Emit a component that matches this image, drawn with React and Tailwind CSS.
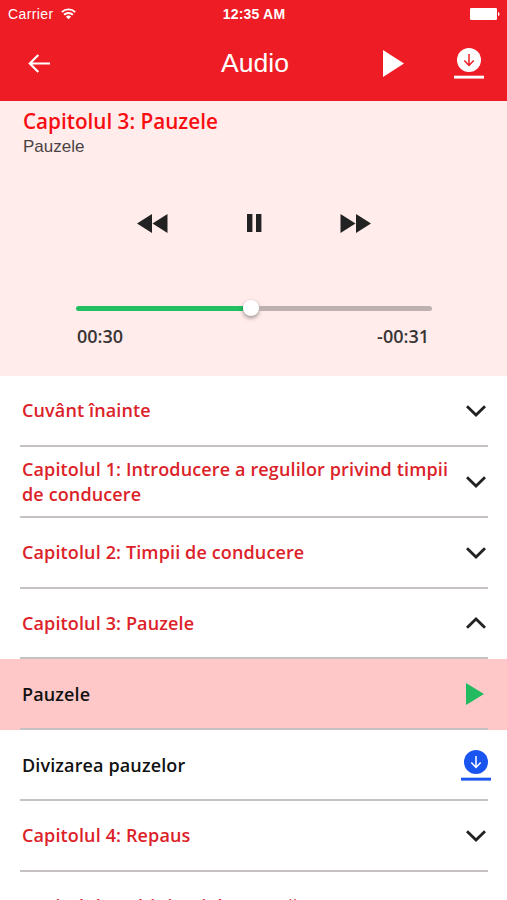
import React from 'react';

const rows = [
  { title: 'Cuvânt înainte', icon: 'down' },
  { title: 'Capitolul 1: Introducere a regulilor privind timpii de conducere', icon: 'down' },
  { title: 'Capitolul 2: Timpii de conducere', icon: 'down' },
  { title: 'Capitolul 3: Pauzele', icon: 'up' },
  { title: 'Pauzele', icon: 'play', track: true, active: true },
  { title: 'Divizarea pauzelor', icon: 'download', track: true },
  { title: 'Capitolul 4: Repaus', icon: 'down' },
  { title: 'Capitolul 5: Alți timpi de muncă', icon: 'down' },
];

function Chevron({ up }) {
  return (
    <svg width="20" height="12" viewBox="0 0 20 12" className={up ? 'mr-[2px] rotate-180' : 'mr-[2px]'} fill="none" stroke="#222" strokeWidth="2.8">
      <path d="M1 1.2 10 10 19 1.2" />
    </svg>
  );
}

function Download({ arrow }) {
  return (
    <svg width="30" height="31" viewBox="0 0 30 31" fill="currentColor">
      <circle cx="15" cy="12" r="12" />
      <rect x="0" y="27.7" width="30" height="2.9" />
      <path d="M15 6v11.2M10.3 12.6l4.7 4.8 4.7-4.8" fill="none" stroke={arrow} strokeWidth="1.5" />
    </svg>
  );
}

function RowIcon({ icon }) {
  if (icon === 'play') {
    return (
      <svg width="18" height="22" viewBox="0 0 18 22" className="mr-[4px]" fill="#22bb60">
        <path d="M0 0 18 11 0 22z" />
      </svg>
    );
  }
  if (icon === 'download') {
    return (
      <span className="-mr-[3px] text-[#1a55f0]">
        <Download arrow="#fff" />
      </span>
    );
  }
  return <Chevron up={icon === 'up'} />;
}

function StatusBar() {
  return (
    <div className="grid h-[27px] grid-cols-3 items-center pl-2 pr-[7px] font-['Liberation_Sans']">
      <div className="flex items-center gap-[7px]">
        <span className="pt-0.5 text-[14px] tracking-[0.4px]">Carrier</span>
        <svg width="15" height="12" viewBox="0 0 15 12" fill="none" stroke="#fff" strokeWidth="1.9">
          <path d="M.8 4.1a9.6 9.6 0 0 1 13.4 0M3.1 6.8a6.3 6.3 0 0 1 8.8 0" />
          <path d="M7.5 11.3 4.9 8.7a3.8 3.8 0 0 1 5.2 0z" fill="#fff" stroke="none" />
        </svg>
      </div>
      <span className="pt-0.5 text-center text-[14px] font-bold tracking-[0.2px]">12:35 AM</span>
      <svg width="30" height="12" viewBox="0 0 30 12" className="justify-self-end" fill="#fff">
        <rect width="27" height="12" rx="1.2" />
        <path d="M28 4c2 .3 2 3.7 0 4z" />
      </svg>
    </div>
  );
}

function Header() {
  return (
    <header className="h-[101px] bg-[#ee1c25] text-white">
      <StatusBar />
      <div className="grid h-[72px] grid-cols-3 items-center pl-7 pr-[23px]">
        <svg width="22" height="19" viewBox="0 0 22 19" fill="none" stroke="#fff" strokeWidth="2.2">
          <path d="M22 9.5H1.5M10.3 1 1.8 9.5l8.5 8.5" />
        </svg>
        <h1 className="pr-0.5 pt-0.5 text-center font-['Liberation_Sans'] text-[26.5px]">Audio</h1>
        <div className="flex items-center justify-end gap-[50px]">
          <svg width="21" height="27" viewBox="0 0 21 27" fill="#fff">
            <path d="M0 0 21 13.5 0 27z" />
          </svg>
          <Download arrow="#ee1c25" />
        </div>
      </div>
    </header>
  );
}

function Player() {
  return (
    <section className="h-[275px] bg-[#ffeceb]">
      <div className="h-[97px] pl-[23px] pt-[5px]">
        <h2 className="text-[20.7px] font-semibold leading-[30px] text-[#f80d12]">Capitolul 3: Pauzele</h2>
        <p className="pt-px font-['Liberation_Sans'] text-[17px] leading-5 text-[#4a4343]">Pauzele</p>
      </div>
      <div className="flex h-[50px] items-center justify-between pl-[137px] pr-[136px] text-[#222]">
        <svg width="31" height="19" viewBox="0 0 31 19" fill="currentColor">
          <path d="M15 0v19L0 9.5zM30.5 0v19L15.5 9.5z" />
        </svg>
        <svg width="15" height="18" viewBox="0 0 15 18" fill="currentColor">
          <path d="M0 0h5.4v18H0zM9 0h5.4v18H9z" />
        </svg>
        <svg width="31" height="19" viewBox="0 0 31 19" fill="currentColor">
          <path d="M.5 0v19l15-9.5zM16 0v19l15-9.5z" />
        </svg>
      </div>
      <div className="ml-[76px] mr-[75px] mt-[52px] flex h-4 items-center">
        <div className="h-[5px] w-[167px] rounded-l-full bg-[#22bf60]" />
        <div className="h-4 w-4 rounded-full bg-white shadow-[0_2px_4px_rgba(0,0,0,0.4)]" />
        <div className="h-[5px] flex-1 rounded-r-full bg-[#bfb0b0]" />
      </div>
      <div className="flex justify-between pl-[77px] pr-[78px] pt-[7px] text-[18px] font-semibold leading-[26px] text-[#3a3434]">
        <span>00:30</span>
        <span>-00:31</span>
      </div>
    </section>
  );
}

export default function App() {
  return (
    <div className="h-[900px] w-[507px] overflow-hidden bg-white font-['Open_Sans',sans-serif]">
      <Header />
      <Player />
      <ul>
        {rows.map((row) => (
          <li key={row.title} className={row.active ? 'h-[70.85px] bg-[#ffc8c8] pl-5 pr-[19px]' : 'h-[70.85px] pl-5 pr-[19px]'}>
            <div className="flex h-full items-center justify-between border-b-2 border-[#c6c2c2] pl-0.5 pt-px">
              <span className={row.track ? 'text-[18px] font-semibold leading-[25px] tracking-[0.13px] text-[#111]' : 'w-[434px] text-[18px] font-semibold leading-[25px] tracking-[0.13px] text-[#dc2229]'}>
                {row.title}
              </span>
              <RowIcon icon={row.icon} />
            </div>
          </li>
        ))}
      </ul>
    </div>
  );
}
